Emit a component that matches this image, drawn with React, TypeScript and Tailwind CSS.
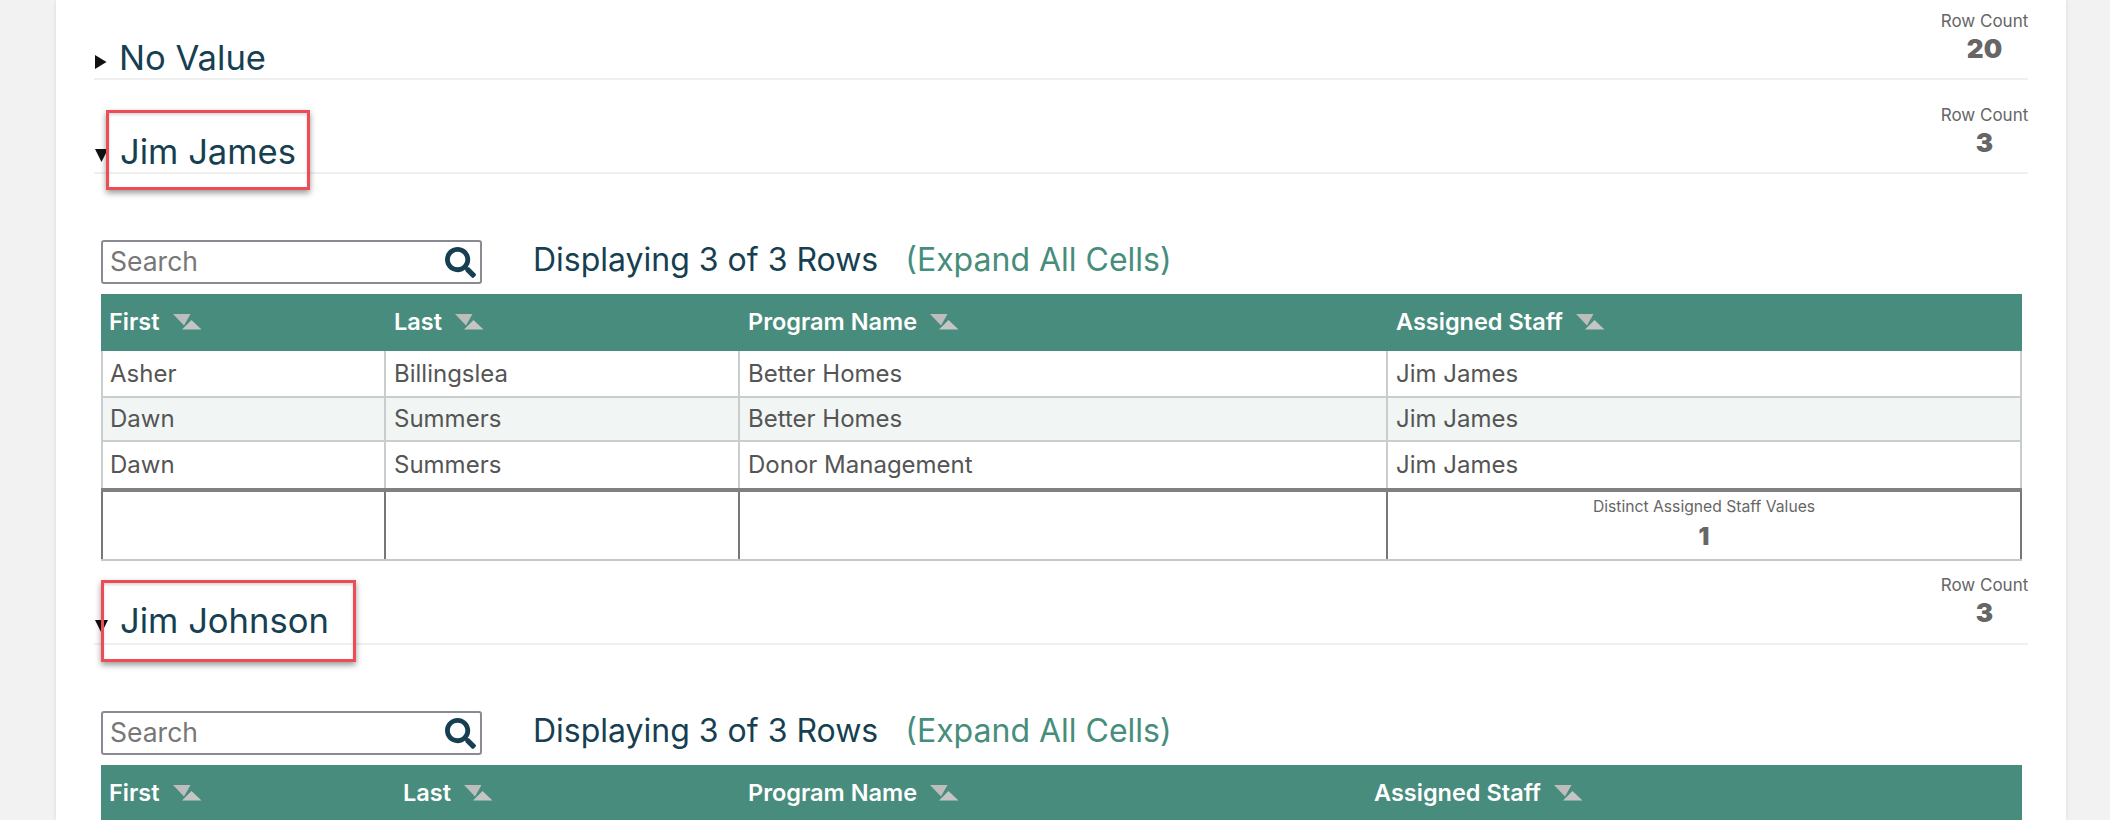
import React from "react";
import { FaSearch } from "react-icons/fa";

const Sort = () => (
  <svg width="29" height="16" viewBox="0 0 29 16" className="shrink-0">
    <polygon points="0,0 17.5,0 11,11.5" fill="#bcbdbc" />
    <polygon points="18.5,6 28.5,15.5 9,15.5" fill="#c4c5c4" />
  </svg>
);

const CaretRight = () => (
  <svg width="12" height="14" viewBox="0 0 12 14" className="shrink-0">
    <polygon points="0,0 11.5,7 0,14" fill="#111" />
  </svg>
);
const CaretDown = () => (
  <svg width="13" height="13" viewBox="0 0 13 13" className="shrink-0">
    <polygon points="0,0 13,0 6.5,13" fill="#111" />
  </svg>
);

function GroupHeader({
  name,
  count,
  open,
  first,
  raised,
  box,
}: {
  name: string;
  count: string;
  open: boolean;
  first?: boolean;
  raised?: boolean;
  box?: string;
}) {
  return (
    <div className={`relative flex h-[80px] justify-between border-b-2 border-[#efefef] ${first ? "" : "mt-[14px]"}`}>
      <div className="flex items-end">
        <span className={open ? "mb-[10px] ml-[1px] w-[25px]" : "mb-[9px] ml-[1px] w-[24px]"}>
          {open ? <CaretDown /> : <CaretRight />}
        </span>
        <span className={`text-[34.6px] leading-[40px] text-[#173f52] ${raised ? "mb-[3px]" : "mb-[1px]"}`}>{name}</span>
      </div>
      <div className={`flex w-[87px] flex-col items-center ${raised ? "pt-[10px]" : "pt-[11px]"}`}>
        <span className="text-[17px] leading-[20px] whitespace-nowrap text-[#666]">Row Count</span>
        <span className="mt-[3px] text-[26px] leading-[30px] font-black text-[#666]">{count}</span>
      </div>
      {box && <div className={box} />}
    </div>
  );
}

function Toolbar() {
  return (
    <div className="ml-[7px] flex h-[44px] items-center">
      <div className="flex h-[44px] w-[381px] items-center justify-between rounded-[3px] border-2 border-[#8a8a93] pr-[4px] pl-[7px]">
        <span className="text-[26.5px] text-[#777]">Search</span>
        <FaSearch className="text-[31px] text-[#173f52]" />
      </div>
      <span className="mb-[5px] ml-[51px] text-[32px] leading-[40px] text-[#173f52]">Displaying 3 of 3 Rows</span>
      <span className="mb-[5px] ml-[27px] text-[32px] leading-[40px] text-[#478d7c]">(Expand All Cells)</span>
    </div>
  );
}

function Head({ cols, labels }: { cols: string; labels: string[] }) {
  return (
    <div className={`grid h-[57px] items-center bg-[#478c7c] pb-[2px] ${cols}`}>
      {labels.map((l) => (
        <div key={l} className="flex items-center gap-[13px] pl-[8px] text-[23.5px] font-semibold text-white">
          <span>{l}</span>
          <Sort />
        </div>
      ))}
    </div>
  );
}

const cols1 = "grid-cols-[285px_354px_648px_634px]";
const cols2 = "grid-cols-[294px_345px_626px_656px]";

const rows = [
  ["Asher", "Billingslea", "Better Homes", "Jim James"],
  ["Dawn", "Summers", "Better Homes", "Jim James"],
  ["Dawn", "Summers", "Donor Management", "Jim James"],
];

const Header1 = ["First", "Last", "Program Name", "Assigned Staff"];

export default function App() {
  return (
    <div className="h-[820px] overflow-hidden bg-[#f2f2f2] font-['Inter',sans-serif]">
      <div className="ml-[56px] h-[820px] w-[2010px] bg-white pr-[38px] pl-[38px] shadow-[0_0_4px_rgba(0,0,0,0.1)]">
        <GroupHeader name="No Value" count="20" open={false} first />

        <GroupHeader
          name="Jim James"
          count="3"
          open
          box="absolute top-[16px] left-[12px] h-[80px] w-[204px] border-[3px] border-[#ee4c54] shadow-[0_3px_6px_rgba(0,0,0,0.4),inset_0_2px_3px_rgba(0,0,0,0.15)]"
        />
        <div className="pt-[66px]">
          <Toolbar />
          <div className="mt-[10px] ml-[7px] w-[1921px]">
            <Head cols={cols1} labels={Header1} />
            {rows.map((r, i) => (
              <div
                key={i}
                className={`grid ${cols1} ${i === 1 ? "bg-[#f1f6f4]" : "bg-white"} ${i === 0 ? "h-[47px] border-b-2 border-[#cacdcd]" : i === 1 ? "h-[44px] border-b-2 border-[#cacdcd]" : "h-[46px]"}`}
              >
                {r.map((c, j) => (
                  <div
                    key={j}
                    className={`flex items-center border-r-2 border-[#cacdcd] text-[24px] text-[#555] ${j === 0 ? "border-l-2 pl-[7px]" : "pl-[8px]"}`}
                  >
                    {c}
                  </div>
                ))}
              </div>
            ))}
            <div className={`grid h-[73px] border-t-4 border-b-2 border-t-[#808080] border-b-[#c8c8c8] ${cols1}`}>
              <div className="border-r-2 border-l-2 border-[#777]" />
              <div className="border-r-2 border-[#777]" />
              <div className="border-r-2 border-[#777]" />
              <div className="flex flex-col items-center border-r-2 border-[#777] pt-[5px] text-[#666]">
                <span className="text-[15.7px] leading-[20px]">Distinct Assigned Staff Values</span>
                <span className="mt-[5px] text-[24px] leading-[30px] font-black">1</span>
              </div>
            </div>
          </div>
        </div>

        <div className="-mt-[10px]">
          <GroupHeader
            name="Jim Johnson"
            count="3"
            open
            raised
            box="absolute top-[15px] left-[7px] h-[82px] w-[255px] border-[3px] border-[#ee4c54] shadow-[0_3px_6px_rgba(0,0,0,0.4),inset_0_2px_3px_rgba(0,0,0,0.15)]"
          />
        </div>
        <div className="pt-[66px]">
          <Toolbar />
          <div className="mt-[10px] ml-[7px] w-[1921px]">
            <Head cols={cols2} labels={Header1} />
          </div>
        </div>
      </div>
    </div>
  );
}
